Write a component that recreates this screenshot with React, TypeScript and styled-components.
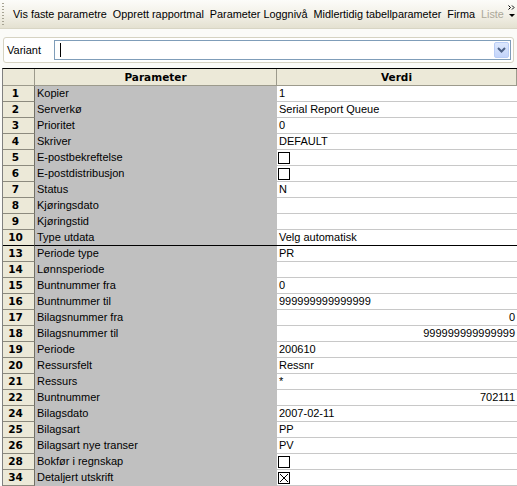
import React from 'react';
import styled, { createGlobalStyle } from 'styled-components';

interface Param {
  no: number;
  name: string;
  value?: string;
  align?: 'left' | 'right';
  check?: boolean;
  last?: boolean;
}

const params: Param[] = [
  { no: 1, name: 'Kopier', value: '1' },
  { no: 2, name: 'Serverkø', value: 'Serial Report Queue' },
  { no: 3, name: 'Prioritet', value: '0' },
  { no: 4, name: 'Skriver', value: 'DEFAULT' },
  { no: 5, name: 'E-postbekreftelse', check: false },
  { no: 6, name: 'E-postdistribusjon', check: false },
  { no: 7, name: 'Status', value: 'N' },
  { no: 8, name: 'Kjøringsdato', value: '' },
  { no: 9, name: 'Kjøringstid', value: '' },
  { no: 10, name: 'Type utdata', value: 'Velg automatisk', last: true },
  { no: 13, name: 'Periode type', value: 'PR' },
  { no: 14, name: 'Lønnsperiode', value: '' },
  { no: 15, name: 'Buntnummer fra', value: '0' },
  { no: 16, name: 'Buntnummer til', value: '999999999999999' },
  { no: 17, name: 'Bilagsnummer fra', value: '0', align: 'right' },
  { no: 18, name: 'Bilagsnummer til', value: '999999999999999', align: 'right' },
  { no: 19, name: 'Periode', value: '200610' },
  { no: 20, name: 'Ressursfelt', value: 'Ressnr' },
  { no: 21, name: 'Ressurs', value: '*' },
  { no: 22, name: 'Buntnummer', value: '702111', align: 'right' },
  { no: 24, name: 'Bilagsdato', value: '2007-02-11' },
  { no: 25, name: 'Bilagsart', value: 'PP' },
  { no: 26, name: 'Bilagsart nye transer', value: 'PV' },
  { no: 28, name: 'Bokfør i regnskap', check: false },
  { no: 34, name: 'Detaljert utskrift', check: true },
];

const menu = [
  'Vis faste parametre',
  'Opprett rapportmal',
  'Parameter Loggnivå',
  'Midlertidig tabellparameter',
  'Firma',
];

const GlobalStyle = createGlobalStyle`
  html, body {
    margin: 0;
    padding: 0;
    background: #fbfbf8;
    overflow: hidden;
  }
  body {
    font-family: "Liberation Sans", Arial, sans-serif;
    font-size: 11px;
    color: #000;
  }
`;

const Screen = styled.div`
  width: 517px;
  height: 486px;
  display: flex;
  flex-direction: column;
  overflow: hidden;
`;

const Toolbar = styled.div`
  height: 29px;
  display: flex;
  align-items: center;
  background: linear-gradient(#fcfcf9 0%, #f3f1e8 50%, #e4e1d1 100%);
  border-bottom: 1px solid #d8d5c4;
  box-sizing: border-box;
  padding-left: 2px;
  position: relative;
  font-size: 10.85px;
`;

const Grip = styled.div`
  width: 2px;
  height: 22px;
  margin-right: 6px;
  background-image: linear-gradient(#a7a494 50%, transparent 50%);
  background-size: 2px 3px;
`;

const MenuItem = styled.span<{ $disabled?: boolean }>`
  padding: 0 3px;
  white-space: nowrap;
  color: ${(p) => (p.$disabled ? '#aca899' : '#000')};
`;

const Chevron = styled.div`
  position: absolute;
  right: 1px;
  top: 4px;
  width: 8px;
  height: 14px;
`;

const VariantPanel = styled.div`
  height: 39px;
  box-sizing: border-box;
  padding: 8px 3px 5px 3px;
`;

const VariantBox = styled.div`
  height: 26px;
  box-sizing: border-box;
  border: 1px solid #d6d3c2;
  border-radius: 3px;
  display: flex;
  align-items: center;
  padding: 0 2px 0 3px;
  background: #fff;
`;

const Label = styled.span`
  width: 47px;
`;

const Combo = styled.div`
  flex: 1;
  height: 20px;
  box-sizing: border-box;
  border: 1px solid #7f9db9;
  background: #fff;
  display: flex;
  align-items: center;
  padding: 1px;
`;

const Caret = styled.div`
  width: 1px;
  height: 14px;
  background: #000;
  margin-left: 4px;
`;

const Spacer = styled.div`
  flex: 1;
`;

const DropButton = styled.div`
  width: 15px;
  height: 16px;
  box-sizing: border-box;
  border: 1px solid #b9cdf6;
  border-radius: 2px;
  background: linear-gradient(#dde8fd, #c3d4fa);
  display: flex;
  align-items: center;
  justify-content: center;
`;

const Grid = styled.div`
  flex: 1;
  margin-left: 2px;
  border-top: 1px solid #000;
  border-left: 1px solid #808080;
  display: grid;
  grid-template-columns: 32px 242px 1fr;
  grid-template-rows: 17px;
  grid-auto-rows: 16px;
  align-content: start;
`;

const HeadCell = styled.div`
  background: #ece9d8;
  border-bottom: 1px solid #9c9a8c;
  border-right: 1px solid #9c9a8c;
  font-family: "DejaVu Sans", Verdana, sans-serif;
  font-weight: bold;
  font-size: 10.5px;
  line-height: 16px;
  text-align: center;
  box-sizing: border-box;
`;

const NoCell = styled.div<{ $last?: boolean }>`
  background: #ece9d8;
  border-bottom: 1px solid ${(p) => (p.$last ? '#000' : '#8c8a7e')};
  border-right: 1px solid #716f64;
  font-family: "DejaVu Sans", Verdana, sans-serif;
  font-weight: bold;
  font-size: 10.5px;
  line-height: 15px;
  text-align: center;
  padding-right: 6px;
  box-sizing: border-box;
`;

const NameCell = styled.div<{ $last?: boolean }>`
  background: #c0c0c0;
  border-bottom: 1px solid ${(p) => (p.$last ? '#000' : '#c0c0c0')};
  padding-left: 2px;
  line-height: 15px;
  white-space: nowrap;
  box-sizing: border-box;
`;

const ValueCell = styled.div<{ $last?: boolean; $align?: string }>`
  background: #fff;
  border-bottom: 1px solid ${(p) => (p.$last ? '#000' : '#c8c8c8')};
  padding: 0 2px;
  line-height: 15px;
  white-space: nowrap;
  box-sizing: border-box;
  display: flex;
  align-items: center;
  justify-content: ${(p) => (p.$align === 'right' ? 'flex-end' : 'flex-start')};
`;

const Check = styled.div`
  width: 12px;
  height: 12px;
  box-sizing: border-box;
  border: 1px solid #000;
  background: #fff;
  margin-left: -1px;
  display: flex;
  align-items: center;
  justify-content: center;
`;

export default function App() {
  return (
    <Screen>
      <GlobalStyle />
      <Toolbar>
        <Grip />
        {menu.map((m) => (
          <MenuItem key={m}>{m}</MenuItem>
        ))}
        <MenuItem $disabled>Liste</MenuItem>
        <Chevron>
          <svg width="8" height="14" viewBox="0 0 8 14">
            <path d="M0.5 1.5l2 2-2 2M4 1.5l2 2-2 2" stroke="#000" strokeWidth="1" fill="none" />
            <path d="M1 10h6l-3 3z" fill="#000" />
          </svg>
        </Chevron>
      </Toolbar>
      <VariantPanel>
        <VariantBox>
          <Label>Variant</Label>
          <Combo>
            <Caret />
            <Spacer />
            <DropButton>
              <svg width="9" height="6" viewBox="0 0 9 6">
                <path d="M1 1l3.5 3.5L8 1" stroke="#4d6185" strokeWidth="2" fill="none" />
              </svg>
            </DropButton>
          </Combo>
        </VariantBox>
      </VariantPanel>
      <Grid>
        <HeadCell />
        <HeadCell>Parameter</HeadCell>
        <HeadCell>Verdi</HeadCell>
        {params.map((p) => (
          <React.Fragment key={p.no}>
            <NoCell $last={p.last}>{p.no}</NoCell>
            <NameCell $last={p.last}>{p.name}</NameCell>
            <ValueCell $last={p.last} $align={p.align}>
              {p.check === undefined ? (
                p.value
              ) : (
                <Check>
                  {p.check && (
                    <svg width="10" height="10" viewBox="0 0 10 10">
                      <path d="M1 1l8 8M9 1l-8 8" stroke="#000" strokeWidth="1" />
                    </svg>
                  )}
                </Check>
              )}
            </ValueCell>
          </React.Fragment>
        ))}
      </Grid>
    </Screen>
  );
}
